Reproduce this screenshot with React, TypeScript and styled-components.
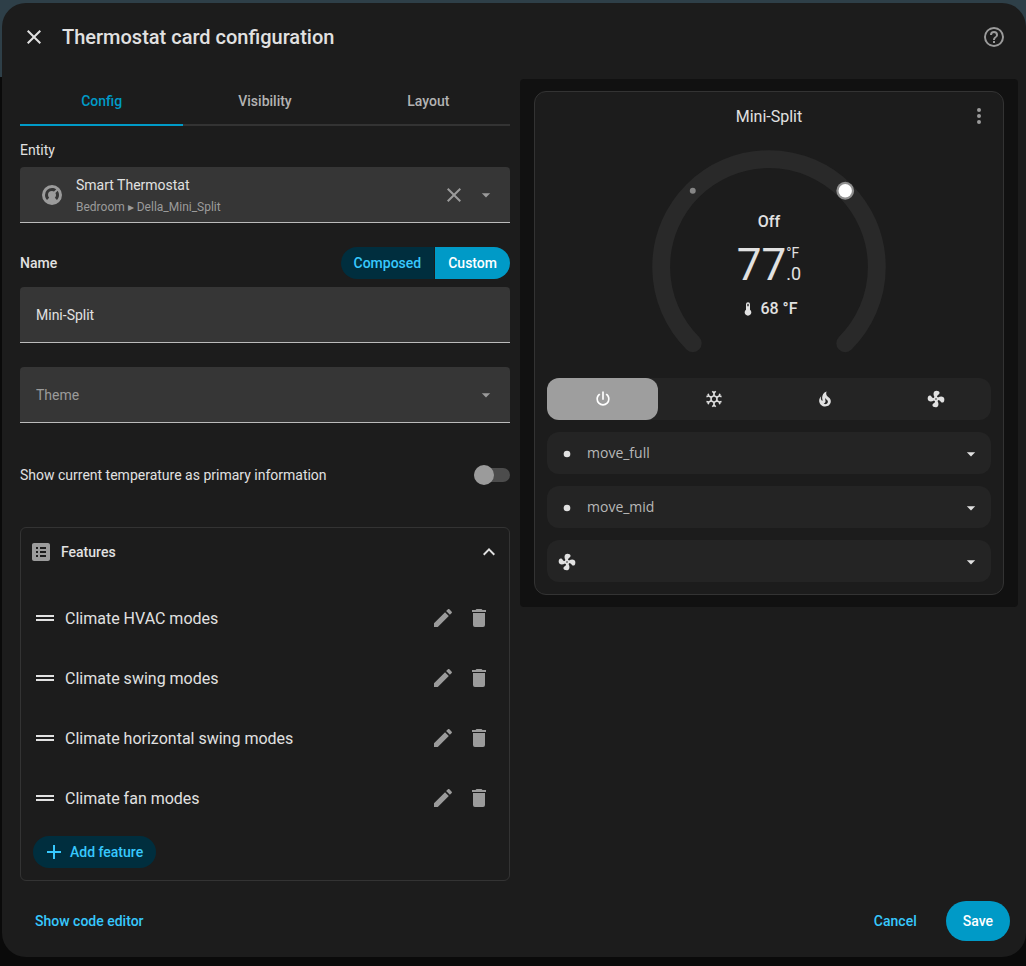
import React from "react";
import styled, { createGlobalStyle, css } from "styled-components";

const GlobalStyle = createGlobalStyle`
  *, *::before, *::after { box-sizing: border-box; }
  body {
    margin: 0;
    background: #0a0a0a;
    color: #e1e1e1;
    font-family: Roboto, "Liberation Sans", sans-serif;
    font-size: 14px;
    line-height: 20px;
  }
  button, input, select { font: inherit; color: inherit; }
  button { border: 0; padding: 0; background: none; cursor: pointer; }
  h1, h2, h3, p, ul { margin: 0; padding: 0; }
`;

const icons = {
  close:
    "M19,6.41L17.59,5L12,10.59L6.41,5L5,6.41L10.59,12L5,17.59L6.41,19L12,13.41L17.59,19L19,17.59L13.41,12L19,6.41Z",
  help:
    "M11,18H13V16H11V18M12,2A10,10 0 0,0 2,12A10,10 0 0,0 12,22A10,10 0 0,0 22,12A10,10 0 0,0 12,2M12,20C7.59,20 4,16.41 4,12C4,7.59 7.59,4 12,4C16.41,4 20,7.59 20,12C20,16.41 16.41,20 12,20M12,6A4,4 0 0,0 8,10H10A2,2 0 0,1 12,8A2,2 0 0,1 14,10C14,12 11,11.75 11,15H13C13,12.75 16,12.5 16,10A4,4 0 0,0 12,6Z",
  thermostat:
    "M16.95,16.95L14.83,14.83C15.55,14.1 16,13.1 16,12C16,11.26 15.79,10.57 15.43,10L17.6,7.81C18.5,9 19,10.43 19,12C19,13.93 18.22,15.68 16.95,16.95M12,5C13.57,5 15,5.5 16.19,6.4L14,8.56C13.43,8.21 12.74,8 12,8A4,4 0 0,0 8,12C8,13.1 8.45,14.1 9.17,14.83L7.05,16.95C5.78,15.68 5,13.93 5,12A7,7 0 0,1 12,5M12,2A10,10 0 0,0 2,12A10,10 0 0,0 12,22A10,10 0 0,0 22,12A10,10 0 0,0 12,2Z",
  caret: "M7,10L12,15L17,10H7Z",
  list:
    "M19 3H5C3.9 3 3 3.9 3 5V19C3 20.1 3.9 21 5 21H19C20.1 21 21 20.1 21 19V5C21 3.9 20.1 3 19 3M7 7H9V9H7V7M7 11H9V13H7V11M7 15H9V17H7V15M17 17H11V15H17V17M17 13H11V11H17V13M17 9H11V7H17V9Z",
  chevronUp: "M7.41,15.41L12,10.83L16.59,15.41L18,14L12,8L6,14L7.41,15.41Z",
  drag: "M21 11H3V9H21V11M21 13H3V15H21V13Z",
  pencil:
    "M20.71,7.04C21.1,6.65 21.1,6 20.71,5.63L18.37,3.29C18,2.9 17.35,2.9 16.96,3.29L15.12,5.12L18.87,8.87M3,17.25V21H6.75L17.81,9.93L14.06,6.18L3,17.25Z",
  trash:
    "M19,4H15.5L14.5,3H9.5L8.5,4H5V6H19M6,19A2,2 0 0,0 8,21H16A2,2 0 0,0 18,19V7H6V19Z",
  plus: "M19,13H13V19H11V13H5V11H11V5H13V11H19V13Z",
  dots:
    "M12,16A2,2 0 0,1 14,18A2,2 0 0,1 12,20A2,2 0 0,1 10,18A2,2 0 0,1 12,16M12,10A2,2 0 0,1 14,12A2,2 0 0,1 12,14A2,2 0 0,1 10,12A2,2 0 0,1 12,10M12,4A2,2 0 0,1 14,6A2,2 0 0,1 12,8A2,2 0 0,1 10,6A2,2 0 0,1 12,4Z",
  thermometer:
    "M15 13V5A3 3 0 0 0 9 5V13A5 5 0 1 0 15 13M12 4A1 1 0 0 1 13 5V8H11V5A1 1 0 0 1 12 4Z",
  power:
    "M16.56,5.44L15.11,6.89C16.84,7.94 18,9.83 18,12A6,6 0 0,1 12,18A6,6 0 0,1 6,12C6,9.83 7.16,7.94 8.88,6.88L7.44,5.44C5.36,6.88 4,9.28 4,12A8,8 0 0,0 12,20A8,8 0 0,0 20,12C20,9.28 18.64,6.88 16.56,5.44M13,3H11V13H13",
  snowflake:
    "M20.79,13.95L18.46,14.57L16.46,13.44V10.56L18.46,9.43L20.79,10.05L21.31,8.12L19.54,7.65L20,5.88L18.07,5.36L17.45,7.69L15.45,8.82L13,7.38V5.12L14.71,3.41L13.29,2L12,3.29L10.71,2L9.29,3.41L11,5.12V7.38L8.5,8.82L6.5,7.69L5.92,5.36L4,5.88L4.47,7.65L2.7,8.12L3.22,10.05L5.55,9.43L7.55,10.56V13.45L5.55,14.58L3.22,13.96L2.7,15.89L4.47,16.36L4,18.12L5.93,18.64L6.55,16.31L8.55,15.18L11,16.62V18.88L9.29,20.59L10.71,22L12,20.71L13.29,22L14.7,20.59L13,18.88V16.62L15.5,15.17L17.5,16.3L18.12,18.63L20,18.12L19.53,16.35L21.3,15.88L20.79,13.95M9.5,10.56L12,9.11L14.5,10.56V13.44L12,14.89L9.5,13.44V10.56Z",
  fire:
    "M17.66 11.2C17.43 10.9 17.15 10.64 16.89 10.38C16.22 9.78 15.46 9.35 14.82 8.72C13.33 7.26 13 4.85 13.95 3C13 3.23 12.17 3.75 11.46 4.32C8.87 6.4 7.85 10.07 9.07 13.22C9.11 13.32 9.15 13.42 9.15 13.55C9.15 13.77 9 13.97 8.8 14.05C8.57 14.15 8.33 14.09 8.14 13.93C8.08 13.88 8.04 13.83 8 13.76C6.87 12.33 6.69 10.28 7.45 8.64C5.78 10 4.87 12.3 5 14.47C5.06 14.97 5.12 15.47 5.29 15.97C5.43 16.57 5.7 17.17 6 17.7C7.08 19.43 8.95 20.67 10.96 20.92C13.1 21.19 15.39 20.8 17.03 19.32C18.86 17.66 19.5 15 18.56 12.72L18.43 12.46C18.22 12 17.66 11.2 17.66 11.2M14.5 17.5C14.22 17.74 13.76 18 13.4 18.1C12.28 18.5 11.16 17.94 10.5 17.28C11.69 17 12.4 16.12 12.61 15.23C12.78 14.43 12.46 13.77 12.33 13C12.21 12.26 12.23 11.63 12.5 10.94C12.69 11.32 12.89 11.7 13.13 12C13.9 13 15.11 13.44 15.37 14.8C15.41 14.94 15.43 15.08 15.43 15.23C15.46 16.05 15.1 16.95 14.5 17.5H14.5Z",
  fan:
    "M12,11A1,1 0 0,0 11,12A1,1 0 0,0 12,13A1,1 0 0,0 13,12A1,1 0 0,0 12,11M12.5,2C17,2 17.11,5.57 14.75,6.75C13.76,7.24 13.32,8.29 13.13,9.22C13.61,9.42 14.03,9.73 14.35,10.13C18.05,8.13 22.03,8.92 22.03,12.5C22.03,17 18.46,17.1 17.28,14.73C16.78,13.74 15.72,13.3 14.79,13.11C14.59,13.59 14.28,14 13.88,14.34C15.87,18.03 15.08,22 11.5,22C7,22 6.91,18.42 9.27,17.24C10.25,16.75 10.69,15.71 10.89,14.79C10.4,14.59 9.97,14.27 9.65,13.87C5.96,15.85 2,15.07 2,11.5C2,7 5.56,6.89 6.74,9.26C7.24,10.25 8.29,10.68 9.22,10.87C9.41,10.39 9.73,9.97 10.14,9.65C8.15,5.96 8.94,2 12.5,2Z",
  bullet: "M12,8A4,4 0 0,0 8,12A4,4 0 0,0 12,16A4,4 0 0,0 16,12A4,4 0 0,0 12,8Z",
};

type IconName = keyof typeof icons;

const IconSvg = styled.svg<{ $size: number }>`
  display: block;
  flex: none;
  width: ${(p) => p.$size}px;
  height: ${(p) => p.$size}px;
  fill: currentColor;
  pointer-events: none;
`;

const Icon = ({ name, size = 24 }: { name: IconName; size?: number }) => (
  <IconSvg $size={size} viewBox="0 0 24 24" aria-hidden="true">
    <path d={icons[name]} />
  </IconSvg>
);

const Backdrop = styled.div`
  min-height: 100vh;
  padding: 3px 0 9px 2px;
  background: linear-gradient(#2e3f48 77px, #0a0a0a 77px);
`;

const Dialog = styled.main`
  display: flex;
  flex-direction: column;
  min-height: calc(100vh - 12px);
  border-radius: 24px;
  background: #1c1c1c;
`;

const Header = styled.header`
  display: flex;
  align-items: center;
  gap: 16px;
  height: 68px;
  padding: 0 20px;
`;

const Title = styled.h1`
  flex: 1;
  font-size: 20px;
  line-height: 28px;
  font-weight: 500;
`;

const IconButton = styled.button<{ $muted?: boolean; $size?: number }>`
  display: grid;
  place-items: center;
  flex: none;
  width: ${(p) => p.$size ?? 24}px;
  height: ${(p) => p.$size ?? 24}px;
  color: ${(p) => (p.$muted ? "#9b9b9b" : "#e1e1e1")};
`;

const Content = styled.div`
  display: grid;
  grid-template-columns: minmax(0, 1fr) minmax(0, 1fr);
  gap: 10px;
  align-items: start;
  padding: 8px 8px 0 10px;
`;

const Editor = styled.form`
  padding-left: 8px;
`;

const Tabs = styled.div`
  display: grid;
  grid-template-columns: repeat(3, 1fr);
`;

const Tab = styled.button<{ $active?: boolean }>`
  height: 47px;
  padding-bottom: 2px;
  font-weight: 500;
  color: ${(p) => (p.$active ? "#009ac7" : "#b3b3b3")};
  border-bottom: 2px solid ${(p) => (p.$active ? "#009ac7" : "#333333")};
`;

const FieldLabel = styled.h2`
  margin: 14px 0 7px;
  font-size: 14px;
  line-height: 20px;
  font-weight: 400;
`;

const fieldBox = css`
  width: 100%;
  height: 56px;
  border: 0;
  border-bottom: 1px solid #bbbbbb;
  border-radius: 4px 4px 0 0;
  background: #363636;
`;

const EntityField = styled.div`
  ${fieldBox}
  display: flex;
  align-items: center;
  padding: 0 14px 0 20px;
  color: #9b9b9b;
`;

const EntityButton = styled.button`
  display: flex;
  flex: 1;
  align-items: center;
  gap: 12px;
  text-align: left;
`;

const EntityText = styled.span`
  display: grid;
  padding-top: 2px;
`;

const EntityName = styled.span`
  line-height: 22px;
  color: #e1e1e1;
`;

const EntityPath = styled.span`
  font-size: 12px;
  line-height: 22px;
`;

const NameRow = styled.div`
  display: flex;
  align-items: center;
  justify-content: space-between;
  margin: 24px 0 8px;
`;

const NameLabel = styled.label`
  font-weight: 500;
`;

const Segments = styled.div`
  display: flex;
  gap: 1px;
  border-radius: 16px;
  overflow: hidden;
`;

const Segment = styled.button<{ $active?: boolean }>`
  height: 32px;
  padding: 0 13px;
  font-weight: 500;
  color: ${(p) => (p.$active ? "#ffffff" : "#37c8fd")};
  background: ${(p) => (p.$active ? "#009ac7" : "#002e3e")};
`;

const TextInput = styled.input`
  ${fieldBox}
  display: block;
  padding: 0 16px;
  outline: 0;
`;

const SelectWrap = styled.div`
  display: grid;
  align-items: center;
  margin-top: 24px;
  color: #9b9b9b;

  > * { grid-area: 1 / 1; }
  > svg { justify-self: end; margin-right: 14px; }
`;

const ThemeSelect = styled.select`
  ${fieldBox}
  appearance: none;
  padding: 0 16px;
  outline: 0;
`;

const ToggleRow = styled.label`
  display: flex;
  align-items: center;
  justify-content: space-between;
  height: 56px;
  margin: 24px 0;
`;

const Switch = styled.input`
  appearance: none;
  display: flex;
  align-items: center;
  width: 36px;
  height: 14px;
  margin: 0;
  border-radius: 7px;
  background: #4c4c4c;

  &::before {
    content: "";
    width: 20px;
    height: 20px;
    flex: none;
    border-radius: 50%;
    background: #9b9b9b;
  }
`;

const Panel = styled.section`
  border: 1px solid #333333;
  border-radius: 6px;
`;

const PanelHeader = styled.button`
  display: flex;
  align-items: center;
  gap: 8px;
  width: 100%;
  height: 48px;
  padding: 0 8px;
  font-weight: 500;
  text-align: left;

  > svg:first-child { color: #9b9b9b; }
  > span { flex: 1; }
`;

const PanelBody = styled.div`
  padding: 12px;
`;

const FeatureList = styled.ul`
  list-style: none;
  margin-bottom: 8px;
`;

const FeatureItem = styled.li`
  display: flex;
  align-items: center;
  height: 60px;
  font-size: 16px;

  > span { flex: 1; margin-left: 8px; padding-top: 2px; }
`;

const AddButton = styled.button`
  display: flex;
  align-items: center;
  gap: 4px;
  height: 32px;
  padding: 0 13px 0 9px;
  border-radius: 16px;
  font-weight: 500;
  color: #37c8fd;
  background: #002e3e;
`;

const Preview = styled.section`
  padding: 12px 14px;
  border-radius: 4px;
  background: #111111;
`;

const Card = styled.article`
  padding: 0 12px 12px;
  border: 1px solid #333333;
  border-radius: 12px;
  background: #1c1c1c;
`;

const CardHeader = styled.div`
  display: grid;
  grid-template-columns: 24px 1fr 24px;
  align-items: center;
  height: 48px;
  margin-bottom: 8px;
  text-align: center;
`;

const CardTitle = styled.h2`
  grid-column: 2;
  padding-top: 2px;
  font-size: 16px;
  line-height: 24px;
  font-weight: 400;
`;

const Dial = styled.div`
  display: grid;
  justify-items: center;
  margin-bottom: 24px;

  > * { grid-area: 1 / 1; }
`;

const DialSvg = styled.svg`
  display: block;
  width: 238px;
  height: 206px;
`;

const Readout = styled.div`
  display: flex;
  flex-direction: column;
  align-items: center;
  padding-top: 62px;
  font-size: 16px;
  line-height: 24px;
  font-weight: 500;
`;

const BigValue = styled.p`
  display: flex;
  align-items: flex-start;
  height: 52px;
  margin: 5px 0 6px;
  font-weight: 400;
`;

const Whole = styled.span`
  font-size: 44px;
  line-height: 52px;
`;

const Side = styled.span`
  display: flex;
  flex-direction: column;
  padding-top: 4px;
`;

const Unit = styled.span`
  font-size: 14px;
  line-height: 20px;
`;

const Decimal = styled.span`
  font-size: 18px;
  line-height: 22px;
`;

const Current = styled.p`
  display: flex;
  align-items: center;
  gap: 4px;
`;

const Controls = styled.div`
  display: grid;
  gap: 12px;
`;

const Modes = styled.div`
  display: grid;
  grid-template-columns: repeat(4, 1fr);
  border-radius: 12px;
  background: #242424;
`;

const Mode = styled.button<{ $active?: boolean }>`
  display: grid;
  place-items: center;
  height: 42px;
  border-radius: 12px;
  color: ${(p) => (p.$active ? "#ffffff" : "#e1e1e1")};
  background: ${(p) => (p.$active ? "#9e9e9e" : "transparent")};
`;

const Option = styled.label`
  display: grid;
  align-items: center;

  > * { grid-area: 1 / 1; }
  > svg { z-index: 1; margin: 2px 10px 0; }
  > svg:last-child { justify-self: end; }
`;

const OptionSelect = styled.select`
  appearance: none;
  width: 100%;
  height: 42px;
  padding: 0 40px;
  border: 0;
  border-radius: 12px;
  outline: 0;
  font-family: "Open Sans", "Noto Sans", sans-serif;
  color: #b8b8b8;
  background: #242424;
`;

const Footer = styled.footer`
  display: flex;
  align-items: center;
  gap: 12px;
  margin-top: auto;
  padding: 16px;
`;

const TextButton = styled.button`
  height: 40px;
  padding: 0 17px;
  font-weight: 500;
  color: #37c8fd;

  &:first-child { margin-right: auto; }
`;

const SaveButton = styled(TextButton)`
  border-radius: 20px;
  color: #ffffff;
  background: #009ac7;
`;

const features = [
  "Climate HVAC modes",
  "Climate swing modes",
  "Climate horizontal swing modes",
  "Climate fan modes",
];

const modes: { icon: IconName; label: string }[] = [
  { icon: "power", label: "Off" },
  { icon: "snowflake", label: "Cool" },
  { icon: "fire", label: "Heat" },
  { icon: "fan", label: "Fan only" },
];

const options: { icon: IconName; label: string; value: string }[] = [
  { icon: "bullet", label: "Swing mode", value: "move_full" },
  { icon: "bullet", label: "Horizontal swing mode", value: "move_mid" },
  { icon: "fan", label: "Fan mode", value: "" },
];

const ThermostatDial = () => (
  <Dial>
    <DialSvg viewBox="0 0 320 277" aria-hidden="true">
      <path
        d="M57.5 262.5A145 145 0 1 1 262.5 262.5"
        fill="none"
        stroke="#292929"
        strokeWidth="24"
        strokeLinecap="round"
      />
      <circle cx="57.5" cy="57.5" r="4" fill="#858585" />
      <circle cx="262.5" cy="57.5" r="12" fill="#8f8f8f" />
      <circle cx="262.5" cy="57.5" r="9" fill="#ffffff" />
    </DialSvg>
    <Readout>
      <p>Off</p>
      <BigValue>
        <Whole>77</Whole>
        <Side>
          <Unit>°F</Unit>
          <Decimal>.0</Decimal>
        </Side>
      </BigValue>
      <Current>
        <Icon name="thermometer" size={16} />
        68 °F
      </Current>
    </Readout>
  </Dial>
);

export default function App() {
  return (
    <>
      <GlobalStyle />
      <Backdrop>
        <Dialog>
          <Header>
            <IconButton type="button" aria-label="Close">
              <Icon name="close" />
            </IconButton>
            <Title>Thermostat card configuration</Title>
            <IconButton type="button" $muted aria-label="Help">
              <Icon name="help" />
            </IconButton>
          </Header>

          <Content>
            <Editor onSubmit={(e: React.FormEvent) => e.preventDefault()}>
              <Tabs role="tablist">
                <Tab type="button" role="tab" aria-selected $active>Config</Tab>
                <Tab type="button" role="tab" aria-selected={false}>Visibility</Tab>
                <Tab type="button" role="tab" aria-selected={false}>Layout</Tab>
              </Tabs>

              <FieldLabel id="entity-label">Entity</FieldLabel>
              <EntityField>
                <EntityButton type="button" aria-labelledby="entity-label">
                  <Icon name="thermostat" />
                  <EntityText>
                    <EntityName>Smart Thermostat</EntityName>
                    <EntityPath>Bedroom ▸ Della_Mini_Split</EntityPath>
                  </EntityText>
                </EntityButton>
                <IconButton type="button" $muted $size={44} aria-label="Clear entity">
                  <Icon name="close" />
                </IconButton>
                <Icon name="caret" size={20} />
              </EntityField>

              <NameRow>
                <NameLabel htmlFor="name">Name</NameLabel>
                <Segments>
                  <Segment type="button">Composed</Segment>
                  <Segment type="button" $active>Custom</Segment>
                </Segments>
              </NameRow>
              <TextInput id="name" defaultValue="Mini-Split" />

              <SelectWrap>
                <ThemeSelect aria-label="Theme" defaultValue="">
                  <option value="">Theme</option>
                </ThemeSelect>
                <Icon name="caret" size={20} />
              </SelectWrap>

              <ToggleRow>
                Show current temperature as primary information
                <Switch type="checkbox" role="switch" />
              </ToggleRow>

              <Panel>
                <PanelHeader type="button" aria-expanded>
                  <Icon name="list" />
                  <span>Features</span>
                  <Icon name="chevronUp" />
                </PanelHeader>
                <PanelBody>
                  <FeatureList>
                    {features.map((feature) => (
                      <FeatureItem key={feature}>
                        <Icon name="drag" />
                        <span>{feature}</span>
                        <IconButton type="button" $muted $size={36} aria-label={`Edit ${feature}`}>
                          <Icon name="pencil" />
                        </IconButton>
                        <IconButton type="button" $muted $size={36} aria-label={`Remove ${feature}`}>
                          <Icon name="trash" />
                        </IconButton>
                      </FeatureItem>
                    ))}
                  </FeatureList>
                  <AddButton type="button">
                    <Icon name="plus" />
                    Add feature
                  </AddButton>
                </PanelBody>
              </Panel>
            </Editor>

            <Preview>
              <Card>
                <CardHeader>
                  <CardTitle>Mini-Split</CardTitle>
                  <IconButton type="button" $muted aria-label="More information">
                    <Icon name="dots" />
                  </IconButton>
                </CardHeader>
                <ThermostatDial />
                <Controls>
                  <Modes>
                    {modes.map((mode, i) => (
                      <Mode key={mode.icon} type="button" $active={i === 0} aria-label={mode.label}>
                        <Icon name={mode.icon} size={20} />
                      </Mode>
                    ))}
                  </Modes>
                  {options.map((option) => (
                    <Option key={option.label}>
                      <Icon name={option.icon} size={20} />
                      <OptionSelect aria-label={option.label} defaultValue={option.value}>
                        <option value={option.value}>{option.value}</option>
                      </OptionSelect>
                      <Icon name="caret" size={20} />
                    </Option>
                  ))}
                </Controls>
              </Card>
            </Preview>
          </Content>

          <Footer>
            <TextButton type="button">Show code editor</TextButton>
            <TextButton type="button">Cancel</TextButton>
            <SaveButton type="button">Save</SaveButton>
          </Footer>
        </Dialog>
      </Backdrop>
    </>
  );
}
